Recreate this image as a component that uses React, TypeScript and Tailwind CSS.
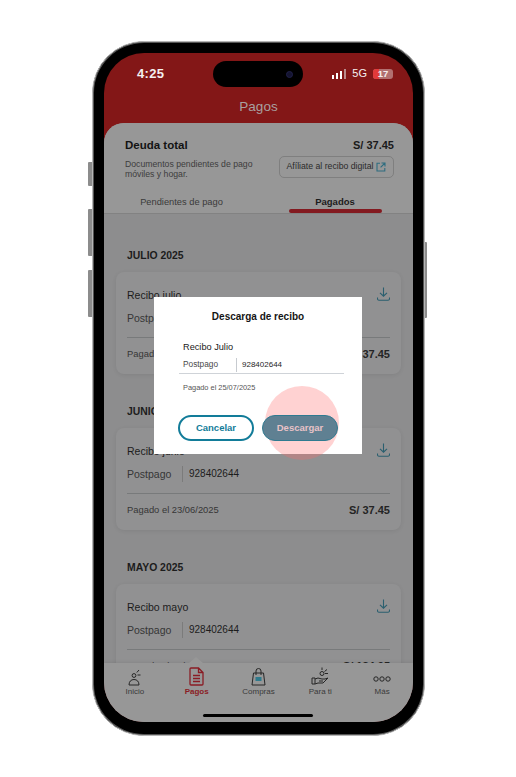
import React from "react";

const Download = () => (
  <svg width="13" height="14" viewBox="0 0 13 14" fill="none" stroke="#2a5f6f" strokeWidth="1.1">
    <path d="M6.500 0.500v8.500M3 5.800l3.500 3.400 3.500-3.400M0.500 10.500v1.300c0 .9.600 1.400 1.400 1.400h9.200c.8 0 1.400-.5 1.400-1.400v-1.300" />
  </svg>
);

const Receipt = ({ title, date, amount }: { title: string; date: string; amount: string }) => (
  <div className="bg-[#919192] rounded-[8px] mx-[12px] px-[11px] h-[102px] shadow-[0_1px_4px_rgba(0,0,0,0.08)]">
    <div className="flex justify-between items-start pt-[15px] h-[30px]">
      <span className="text-[10.5px] leading-[16px] text-[#1c1c1c]">{title}</span>
      <Download />
    </div>
    <div className="flex items-center mt-[8px] h-[16px] text-[10.5px] leading-[14px]">
      <span className="w-[55px] text-[#363636]">Postpago</span>
      <span className="border-l border-[#7b7b7b] pl-[6px] text-[10px] text-[#1c1c1c] h-[16px] leading-[16px]">928402644</span>
    </div>
    <div className="border-t border-[#787a7b] mt-[11px] flex justify-between items-center h-[33px]">
      <span className="text-[9.4px] text-[#363636]">{date}</span>
      <span className="text-[11px] font-bold text-[#242424]">{amount}</span>
    </div>
  </div>
);

const Section = ({ label, mt, children }: { label: string; mt: string; children: React.ReactNode }) => (
  <div className={mt}>
    <div className="px-[23px] text-[10.4px] leading-[14px] font-bold text-[#1c1c1c] mb-[9px]">{label}</div>
    {children}
  </div>
);

const NavItem = ({ label, active, icon }: { label: string; active?: boolean; icon: React.ReactNode }) => (
  <div className="flex flex-col items-center">
    <div className="h-[19px] flex items-end justify-center">{icon}</div>
    <span className={`text-[8px] leading-[12px] ${active ? "text-[#8a1c24] font-bold" : "text-[#3a3a3a]"}`}>{label}</span>
  </div>
);

export default function App() {
  return (
    <div className="w-[516px] h-[777px] bg-white overflow-hidden relative" style={{ fontFamily: '"Liberation Sans", Arial, sans-serif' }}>
      {/* side buttons */}
      <div className="absolute left-[88px] top-[162px] w-[4px] h-[24px] bg-[#8c8c8c] rounded-l-[1px]" />
      <div className="absolute left-[88px] top-[209px] w-[4px] h-[47px] bg-[#8c8c8c] rounded-l-[1px]" />
      <div className="absolute left-[88px] top-[270px] w-[4px] h-[47px] bg-[#8c8c8c] rounded-l-[1px]" />
      <div className="absolute left-[425px] top-[242px] w-[2px] h-[76px] bg-[#8c8c8c] rounded-r-[1px]" />

      <div className="ml-[92px] pt-[41px]">
        <div className="w-[333px] h-[695px] rounded-[52px] bg-black border border-[#b5b5b5] shadow-[inset_0_0_0_1px_#555] pt-[11px] pl-[11px]">
          <div className="w-[309px] h-[669px] rounded-[40px] overflow-hidden bg-[#831717] flex flex-col relative">
            {/* status bar */}
            <div className="h-[39px] flex items-center justify-between pl-[33px] pr-[20px] pt-[2px] shrink-0">
              <span className="text-[13px] font-bold text-[#f4efef] tracking-[0.3px]">4:25</span>
              <div className="flex items-center">
                <div className="flex items-end gap-[1.5px] h-[10px] mr-[6px]">
                  <div className="w-[2.500px] h-[3.500px] bg-white" />
                  <div className="w-[2.500px] h-[5.500px] bg-white" />
                  <div className="w-[2.500px] h-[7.500px] bg-white" />
                  <div className="w-[2.500px] h-[10px] bg-[#b98a8a]" />
                </div>
                <span className="text-[11px] font-medium text-[#f4efef] mr-[6px]">5G</span>
                <div className="w-[20px] h-[10px] rounded-[3px] bg-[#b27070] relative overflow-hidden flex items-center justify-center">
                  <div className="absolute left-0 top-0 bottom-0 w-[6px] bg-[#e23a3a]" />
                  <span className="relative text-[9.5px] font-bold text-[#f6eeee] leading-none">17</span>
                </div>
              </div>
            </div>
            {/* title */}
            <div className="h-[31px] shrink-0 text-center text-[13.5px] leading-[29px] font-medium text-[#a9a0a0]">Pagos</div>

            {/* panel */}
            <div className="flex-1 min-h-0 rounded-t-[20px] bg-[#8d8d8e] overflow-hidden flex flex-col relative">
              <div className="h-[91px] shrink-0 bg-[#979797] border-b border-[#828282] relative">
                <div className="flex justify-between pl-[21px] pr-[19px] pt-[14px]">
                  <span className="text-[11.5px] leading-[16px] font-bold text-[#131313]">Deuda total</span>
                  <span className="text-[11px] leading-[16px] font-bold text-[#1a1a1a]">S/ 37.45</span>
                </div>
                <div className="flex justify-between items-start pl-[21px] pr-[19px] mt-[3px]">
                  <div className="text-[8.7px] leading-[10px] text-[#3d3d3d] pt-[3px]">
                    Documentos pendientes de pago
                    <br />
                    móviles y hogar.
                  </div>
                  <div className="h-[22px] w-[115px] rounded-[5px] border border-[#7f7f7f] flex items-center justify-center gap-[3px] text-[8.7px] text-[#2b2b2b]">
                    Afíliate al recibo digital
                    <svg width="10" height="10" viewBox="0 0 10 10" fill="none" stroke="#2f6d80" strokeWidth="1.1">
                      <path d="M4 1.200H1v7.800h7.800V6M5.500 1h3.500v3.500M9 1 4.600 5.400" />
                    </svg>
                  </div>
                </div>
                <div className="absolute left-0 right-0 bottom-0 flex h-[18px]">
                  <div className="w-[153px] pl-[2px] text-center text-[9.3px] leading-[14px] text-[#3a3a3a]">Pendientes de pago</div>
                  <div className="flex-1 flex flex-col items-center">
                    <span className="text-[9.5px] leading-[14px] font-bold text-[#1c1c1c]">Pagados</span>
                    <div className="w-[93px] h-[4.500px] rounded-full bg-[#831a20]" />
                  </div>
                </div>
              </div>

              <div className="flex-1 min-h-0 overflow-hidden relative">
                <Section label="JULIO 2025" mt="mt-[35px]">
                  <Receipt title="Recibo julio" date="Pagado el 25/07/2025" amount="S/ 37.45" />
                </Section>
                <Section label="JUNIO 2025" mt="mt-[31px]">
                  <Receipt title="Recibo junio" date="Pagado el 23/06/2025" amount="S/ 37.45" />
                </Section>
                <Section label="MAYO 2025" mt="mt-[31px]">
                  <Receipt title="Recibo mayo" date="Pagado el 19/05/2025" amount="S/ 134.95" />
                </Section>
              </div>

              {/* bottom nav */}
              <div className="h-[59px] shrink-0 bg-[#979797] shadow-[0_-1px_3px_rgba(0,0,0,0.08)] relative grid grid-cols-5 pt-[4px]">
                <div className="absolute left-[85px] top-[-6px] w-[14px] h-[6px] bg-[#979797] [clip-path:polygon(50%_0,100%_100%,0_100%)]" />
                <NavItem
                  label="Inicio"
                  icon={
                    <svg width="14" height="17" viewBox="0 0 14 17" fill="none" stroke="#262626" strokeWidth="1">
                      <circle cx="6" cy="6.500" r="1.900" />
                      <path d="M1 16c0-3.500 2-5.500 5-5.500s5 2 5 5.500zM9.500 6h3M8.800 3.500l2.200-2.500" />
                    </svg>
                  }
                />
                <NavItem
                  label="Pagos"
                  active
                  icon={
                    <svg width="15" height="19" viewBox="0 0 15 19" fill="none" stroke="#8a1c24" strokeWidth="1.300">
                      <path d="M2 1h7.500l4.500 4.500V17a1 1 0 0 1-1 1H2a1 1 0 0 1-1-1V2a1 1 0 0 1 1-1zM9.500 1v4.500H14M4 8.500h7M4 11.500h7M4 14.500h7" />
                    </svg>
                  }
                />
                <NavItem
                  label="Compras"
                  icon={
                    <svg width="15" height="18" viewBox="0 0 15 18" fill="none" stroke="#262626" strokeWidth="1">
                      <path d="M2.500 5h10l1.500 12H1zM5 7V3a2.500 2.500 0 0 1 5 0v4" />
                      <rect x="4.500" y="9" width="6" height="4" fill="#2f7a8c" stroke="none" />
                    </svg>
                  }
                />
                <NavItem
                  label="Para ti"
                  icon={
                    <svg width="18" height="19" viewBox="0 0 18 19" fill="none" stroke="#262626" strokeWidth="1">
                      <circle cx="11" cy="6.500" r="2" />
                      <path d="M11 3V0.500M13.500 4.500l2.500-2M14 6.500h3M1 11h3v6H1zM4 12l3-1 4 1h3l3-1-5 5H7l-3 1M8 14h4" />
                    </svg>
                  }
                />
                <NavItem
                  label="Más"
                  icon={
                    <svg width="18" height="6" viewBox="0 0 18 6" fill="none" stroke="#262626" strokeWidth="1" className="mb-[4px]">
                      <circle cx="3" cy="3" r="2.200" />
                      <circle cx="9" cy="3" r="2.200" />
                      <circle cx="15" cy="3" r="2.200" />
                    </svg>
                  }
                />
                <div className="absolute left-[99px] bottom-[5px] w-[110px] h-[3px] rounded-full bg-black" />
              </div>
            </div>

            {/* island */}
            <div className="absolute left-[109px] top-[8px] w-[90px] h-[26px] rounded-full bg-black flex items-center justify-end pr-[10px]">
              <div className="w-[7px] h-[7px] rounded-full bg-[#141430] border border-[#20204a]" />
            </div>

            {/* modal */}
            <div className="absolute left-[50px] top-[244px] w-[208px] h-[157px] bg-white px-[26px]">
              <div className="text-center text-[10px] leading-[14px] font-bold text-[#151515] pt-[13px]">Descarga de recibo</div>
              <div className="text-[9.200px] leading-[12px] font-medium text-[#1a1a1a] mt-[17px] ml-[3px]">Recibo Julio</div>
              <div className="flex items-center h-[16px] mt-[5px] -ml-[1px] w-[165px] border-b border-[#cfd3d8] pb-[2px] text-[8.300px] text-[#4a4a4a]">
                <span className="w-[57px] pl-[4px]">Postpago</span>
                <span className="border-l border-[#c7cbd0] pl-[5px] h-[14px] leading-[14px] text-[8px] text-[#262626]">928402644</span>
              </div>
              <div className="text-[7.400px] leading-[10px] text-[#555] mt-[9px] ml-[3px]">Pagado el 25/07/2025</div>
              <div className="flex justify-between mt-[22px] -ml-[2px] w-[160px]">
                <div className="w-[76px] h-[26px] rounded-full border-2 border-[#127c99] flex items-center justify-center text-[9.500px] font-bold text-[#127c99]">
                  Cancelar
                </div>
                <div className="relative z-30 w-[76px] h-[26px] rounded-full bg-[#5f8092] border border-[#2f7a90] flex items-center justify-center text-[9.500px] font-bold text-[#e9c3c8]">
                  Descargar
                </div>
              </div>
            </div>

            {/* touch indicator */}
            <div className="absolute left-[161px] top-[333px] w-[74px] h-[74px] rounded-full bg-[#ff6b6b]/30 z-20" />
          </div>
        </div>
      </div>
    </div>
  );
}
